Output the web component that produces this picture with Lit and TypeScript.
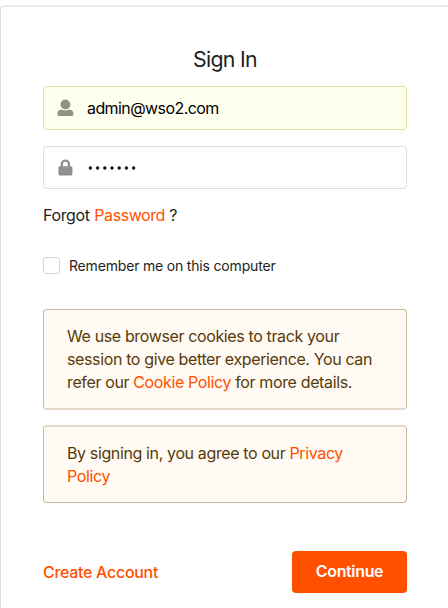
import { LitElement, html, svg, css } from "lit";
import { customElement } from "lit/decorators.js";

@customElement("app-root")
export class AppRoot extends LitElement {
  static styles = css`
    :host {
      display: block;
      height: 608px;
      overflow: hidden;
      background: #fff;
      padding-top: 5px;
      box-sizing: border-box;
      font-family: Inter, "Liberation Sans", sans-serif;
      font-size: 16px;
      line-height: 22.85px;
      color: #1e1e20;
    }
    .card {
      box-sizing: border-box;
      width: 450px;
      height: 640px;
      border: 1px solid #dededf;
      border-top: 2px solid #ececec;
      border-radius: 4px;
      padding: 38px 42px 0;
      display: flex;
      flex-direction: column;
    }
    h1 {
      margin: 0;
      height: 29px;
      line-height: 28px;
      font-size: 21.3px;
      font-weight: 400;
      letter-spacing: -0.68px;
      text-align: center;
    }
    .field {
      box-sizing: border-box;
      height: 43px;
      border: 1px solid #dededf;
      border-radius: 4px;
      display: flex;
      align-items: center;
      padding-left: 13px;
      color: #000;
    }
    .icon {
      width: 17px;
      height: 18px;
      margin-right: 13px;
      fill: #909090;
    }
    .user {
      margin-top: 12px;
      height: 44px;
      background: #fffff0;
      border-color: #e5dfa1;
    }
    .user .icon {
      fill: #919187;
    }
    .user span {
      letter-spacing: -0.58px;
    }
    .pass {
      margin-top: 16px;
    }
    .dots {
      width: 52px;
      height: 5px;
      fill: #111;
    }
    a {
      color: #ff5000;
      text-decoration: none;
    }
    .forgot {
      margin-top: 15px;
      letter-spacing: -0.37px;
    }
    .forgot a {
      margin-left: 0.6px;
      letter-spacing: -0.42px;
    }
    .remember {
      margin-top: 30px;
      height: 17px;
      display: flex;
      align-items: center;
      font-size: 14px;
      line-height: 17px;
      letter-spacing: -0.18px;
    }
    .box {
      box-sizing: border-box;
      width: 17px;
      height: 17px;
      border: 1px solid #d4d4d5;
      border-radius: 3px;
      margin-right: 9px;
    }
    .message {
      box-sizing: border-box;
      background: #fffaf3;
      border: 1px solid #c9ba9b;
      border-radius: 4px;
      color: #573a08;
      padding: 15px 23px;
      letter-spacing: -0.37px;
      white-space: nowrap;
    }
    .cookies {
      margin-top: 35px;
      height: 101px;
      border-bottom: 2px solid #e4dac7;
    }
    .privacy {
      margin-top: 15px;
      height: 78px;
      border-top: 2px solid #e4dac7;
    }
    .actions {
      margin-top: 48px;
      display: flex;
      justify-content: space-between;
      align-items: center;
    }
    .create {
      padding-top: 1px;
      font-weight: 500;
      letter-spacing: -0.3px;
    }
    button {
      border: 0;
      border-radius: 4px;
      width: 115px;
      height: 42px;
      padding: 0;
      background: #ff5000;
      color: #fff;
      font: inherit;
      font-weight: 600;
      letter-spacing: -0.35px;
    }
  `;

  render() {
    return html`
      <main class="card">
        <h1>Sign In</h1>
        <div class="field user">
          <svg class="icon" viewBox="-0.4 0 17 18">
            <circle cx="8" cy="5.500" r="4.900" />
            <path d="M3.6 10.7h1.2c2 .9 4.4.9 6.4 0h1.2C14.6 10.7 16 12.3 16 14.3v1c0 1-.6 1.6-1.5 1.6h-13C.6 16.9 0 16.3 0 15.3v-1c0-2 1.4-3.6 3.6-3.6z" />
          </svg>
          <span>admin@wso2.com</span>
        </div>
        <div class="field pass">
          <svg class="icon" viewBox="-0.4 0 17 18">
            <path
              fill-rule="evenodd"
              d="M3.3 7.2V5.1a4.7 4.7 0 0 1 9.4 0V7.2h.8c.8 0 1.5.6 1.5 1.4v6.5c0 .8-.7 1.4-1.5 1.4h-11c-.8 0-1.5-.6-1.5-1.4V8.6c0-.8.7-1.4 1.5-1.4zm2.3 0h4.8V5.1a2.4 2.4 0 0 0-4.8 0z"
            />
          </svg>
          <svg class="dots" viewBox="0 0 52 5">
            ${Array.from({ length: 7 }, (_, i) => svg`<circle cx=${3.4 + i * 7.2} cy="3" r="1.7" />`)}
          </svg>
        </div>
        <div class="forgot">Forgot <a>Password</a> ?</div>
        <label class="remember"><span class="box"></span>Remember me on this computer</label>
        <div class="message cookies">
          We use browser cookies to track your<br />session to give better experience. You can<br />refer our
          <a>Cookie Policy</a> for more details.
        </div>
        <div class="message privacy">By signing in, you agree to our <a>Privacy<br />Policy</a></div>
        <div class="actions">
          <a class="create">Create Account</a>
          <button>Continue</button>
        </div>
      </main>
    `;
  }
}
